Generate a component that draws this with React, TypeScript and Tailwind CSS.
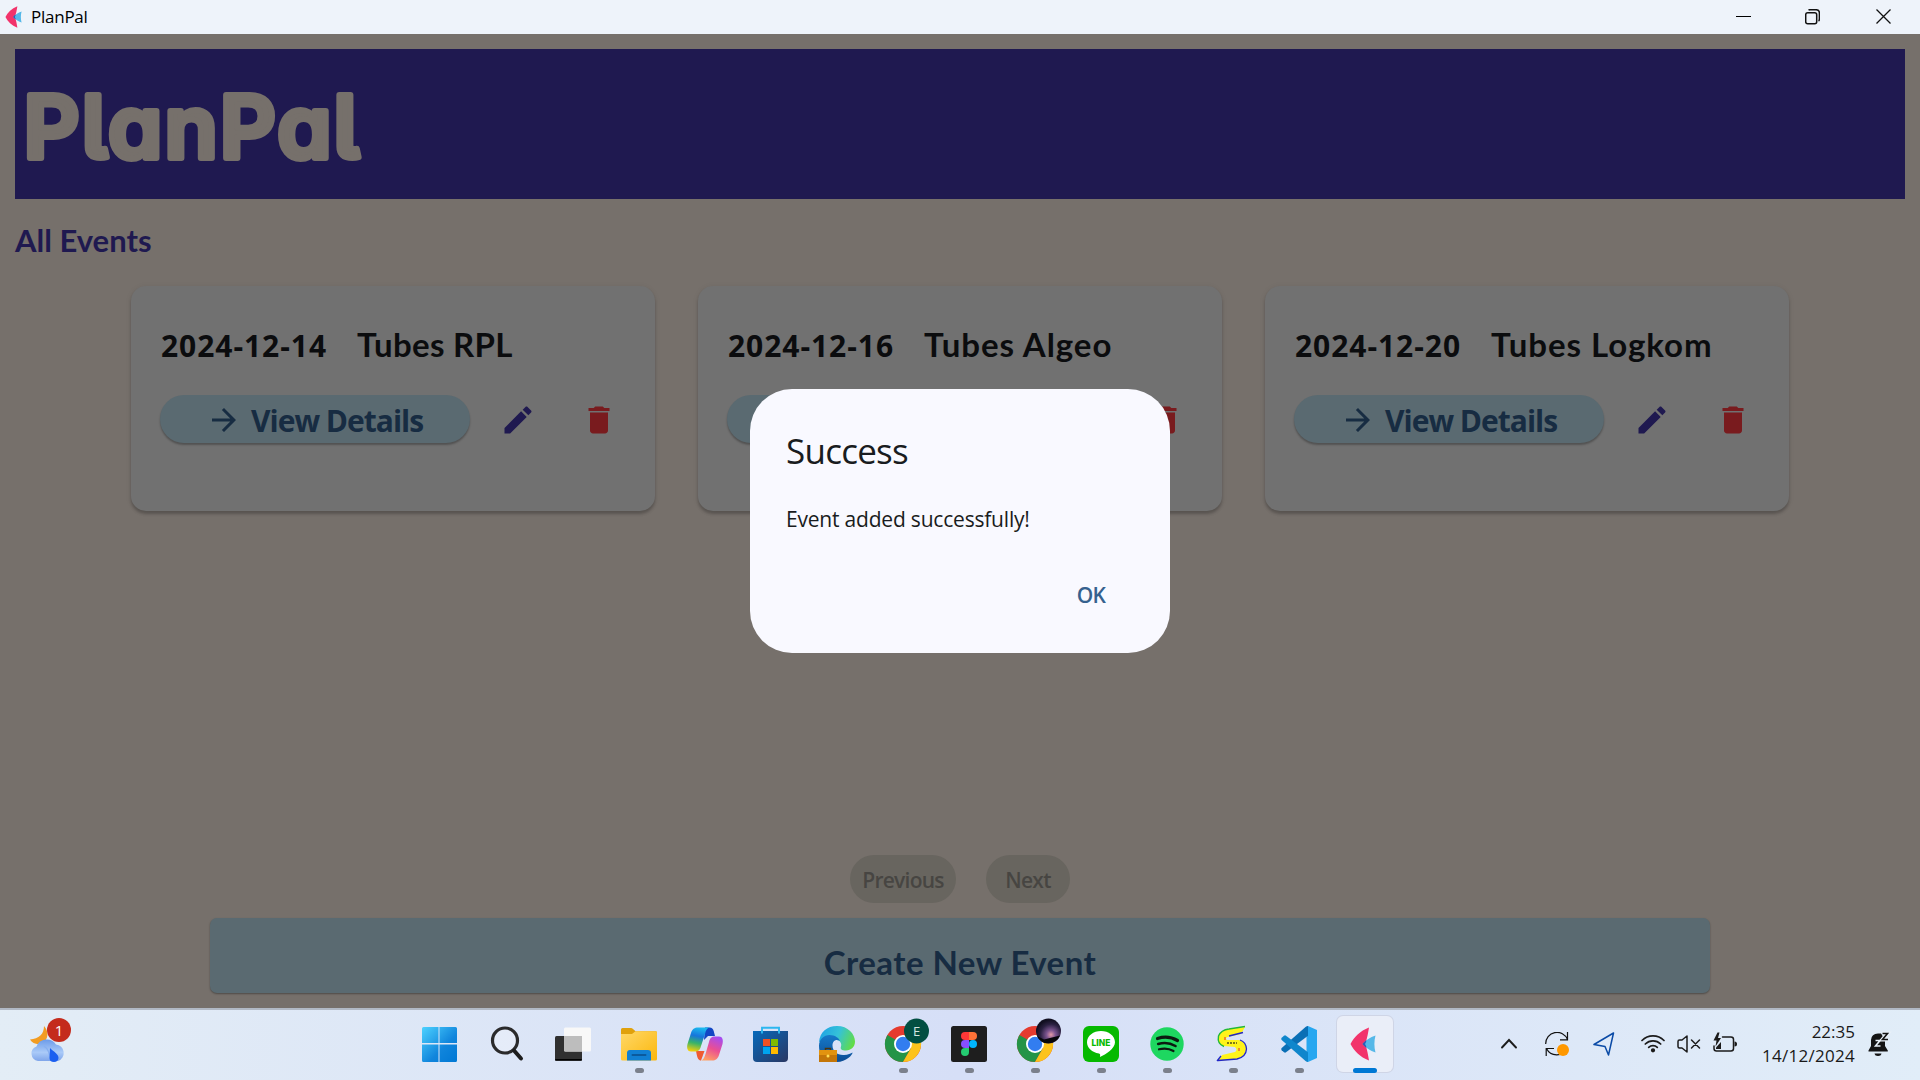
import React, { ReactNode } from "react";

type EventItem = { date: string; title: string; tracking: string };

const EVENTS: EventItem[] = [
  { date: "2024-12-14", title: "Tubes RPL", tracking: "tracking-[0.3px]" },
  { date: "2024-12-16", title: "Tubes Algeo", tracking: "tracking-[0.95px]" },
  { date: "2024-12-20", title: "Tubes Logkom", tracking: "tracking-[0.95px]" },
];

function FletLogo({ className }: { className: string }) {
  return (
    <svg viewBox="0 0 26 34" className={className}>
      <path d="M19 0.5 C10 4 4 10 0.5 17 C4 24 10 30 19 33.5 C18 28 17.500 23 15 17 C17.500 11 18 6 19 0.500Z" fill="#f2336b" />
      <path d="M25.500 8.500 C20 10.500 16 13 12.500 17 C16 21 20 23.500 25.500 25.500 C24 20 24 14 25.500 8.500Z" fill="#56b8e8" />
      <path d="M16.500 13.300 C15 14.300 13.500 15.700 12.500 17 C13.500 18.300 15 19.700 16.500 20.700 C16.300 19.300 15.800 18.200 15 17 C15.800 15.800 16.300 14.700 16.500 13.300Z" fill="#2d5bb5" />
    </svg>
  );
}

function TitleBar() {
  return (
    <header className="flex h-[34px] shrink-0 items-center bg-[#eef3fa] pl-[5px]">
      <FletLogo className="h-[22px] w-[17px]" />
      <span className="ml-[9px] text-[17px] leading-[34px] tracking-[-0.25px] text-black">PlanPal</span>
      <div className="ml-auto flex items-center">
        <svg width="15" height="16" viewBox="0 0 15 16" className="mr-[54px]">
          <path d="M0 7.500H15" stroke="#000" />
        </svg>
        <svg width="15" height="16" viewBox="0 0 15 16" className="mr-[56px]" fill="none" stroke="#111" strokeWidth="1.500">
          <rect x="0.700" y="3.700" width="11" height="11" rx="2" />
          <path d="M3.500 1.200C4 0.800 4.500 0.700 5 0.700H11C13 0.700 14.400 2 14.400 4V10C14.400 11 14 11.700 13.500 12" />
        </svg>
        <svg width="15" height="16" viewBox="0 0 15 16" className="mr-[29px]" fill="none" stroke="#111" strokeWidth="1.300">
          <path d="M0.500 0.500L14.500 14.500M14.500 0.500L0.500 14.500" />
        </svg>
      </div>
    </header>
  );
}

function EventCard({ date, title, tracking }: EventItem) {
  return (
    <article className="h-[225px] w-[524px] rounded-[15px] bg-[#717171] pt-[37px] pl-[29px] shadow-[0_3px_3px_rgba(0,0,0,0.22),0_1px_6px_rgba(0,0,0,0.07)]">
      <div className="flex h-[42px] items-baseline pl-px text-[#0b0c0e]">
        <span className="w-[196px] text-[30px] leading-[42px] font-bold tracking-[0.95px]">{date}</span>
        <span className={`font-['Lato',sans-serif] text-[33px] leading-[42px] font-bold whitespace-nowrap ${tracking}`}>{title}</span>
      </div>
      <div className="mt-[30px] flex items-center">
        <button className="flex h-12 w-[310px] items-center rounded-full bg-[#5a6a71] pt-[2px] pl-[46px] text-[#172c42] shadow-[0_2px_2px_rgba(0,0,0,0.28)]">
          <svg viewBox="0 0 24 24" className="size-9" fill="currentColor">
            <path d="M12 4l-1.410 1.410L16.170 11H4v2h12.170l-5.580 5.590L12 20l8-8z" />
          </svg>
          <span className="ml-[9px] pt-[2px] text-[30px] leading-[40px] font-bold tracking-[-1px] whitespace-nowrap">View Details</span>
        </button>
        <svg viewBox="0 0 24 24" className="mt-[2px] ml-[30px] size-9" fill="#1f1950">
          <path d="M3 17.250V21h3.750L17.810 9.940l-3.750-3.750L3 17.250zM20.710 7.040c.39-.39.39-1.020 0-1.410l-2.340-2.340c-.39-.39-1.020-.39-1.410 0l-1.830 1.830 3.750 3.750 1.830-1.830z" />
        </svg>
        <svg viewBox="0 0 24 24" className="mt-[2px] ml-[45px] size-9" fill="#791b1e">
          <path d="M6 19c0 1.100.9 2 2 2h8c1.100 0 2-.9 2-2V7H6v12zM19 4h-3.500l-1-1h-5l-1 1H5v2h14V4z" />
        </svg>
      </div>
    </article>
  );
}

function SuccessDialog() {
  return (
    <div role="dialog" className="absolute top-[389px] left-[750px] h-[264px] w-[420px] rounded-[42px] bg-[#f9f9ff] px-9 pt-[38px]">
      <h2 className="text-[35px] leading-[48px] tracking-[-0.75px] text-[#191c20]">Success</h2>
      <p className="mt-[29px] text-[21px] leading-[30px] tracking-[-0.2px] whitespace-nowrap text-[#191c20]">Event added successfully!</p>
      <div className="mt-[46px] flex justify-end pr-[29px]">
        <button className="text-[21px] leading-[30px] font-semibold tracking-[-0.8px] text-[#36618e]">OK</button>
      </div>
    </div>
  );
}

function PlanPalWindow() {
  return (
    <main className="flex h-[974px] shrink-0 flex-col bg-[#76706b] px-[15px] pt-[15px]">
      <div className="h-[150px] shrink-0 bg-[#1f1950]">
        <svg viewBox="0 0 400 150" width="400" height="150">
          <text
            x="8.500"
            y="109"
            textLength="336"
            lengthAdjust="spacing"
            fill="#76706b"
            stroke="#76706b"
            strokeWidth="6"
            strokeLinejoin="round"
            className="font-['Inter',sans-serif] text-[87px] font-semibold [font-feature-settings:'cv11','cv05']"
          >
            PlanPal
          </text>
        </svg>
      </div>
      <h1 className="mt-[21px] font-['Lato',sans-serif] text-[31px] leading-[40px] font-bold text-[#1f1950]">All Events</h1>
      <section className="mt-[26px] flex gap-[43px] pl-[116px]">
        {EVENTS.map((e) => (
          <EventCard key={e.date} {...e} />
        ))}
      </section>
      <div className="mt-auto flex justify-center gap-[30px] text-[21px] leading-[30px] font-semibold tracking-[-0.75px] text-[#474542]">
        <button className="h-12 w-[106px] rounded-full bg-[#68655f] pt-[2px]">Previous</button>
        <button className="h-12 w-[84px] rounded-full bg-[#68655f] pt-[2px]">Next</button>
      </div>
      <button className="mx-auto mt-[15px] mb-[15px] h-[75px] w-[1500px] shrink-0 rounded-[7px] bg-[#5a6a71] pt-[13px] font-['Lato',sans-serif] text-[33px] leading-[40px] font-bold tracking-[0.45px] text-[#172c42] shadow-[0_1px_2px_rgba(0,0,0,0.35)]">
        Create New Event
      </button>
    </main>
  );
}

const ICON = "size-9 overflow-visible";

function WindowsIcon() {
  return (
    <svg viewBox="1.500 0 36 36" className={ICON}>
      <defs>
        <linearGradient id="win" x1="0" y1="0" x2="1" y2="1">
          <stop offset="0" stopColor="#4dd2ff" />
          <stop offset="0.600" stopColor="#1085dc" />
          <stop offset="1" stopColor="#0078d4" />
        </linearGradient>
      </defs>
      <path fill="url(#win)" d="M2 1H17V17H0.500V2.500Q0.500 1 2 1ZM18 1H34Q35.500 1 35.500 2.500V17H18ZM0.500 18.500H17V36H2Q0.500 36 0.500 34.500ZM18 18.500H35.500V34.500Q35.500 36 34 36H18Z" />
    </svg>
  );
}

function SearchIcon() {
  return (
    <svg viewBox="0 0 36 36" className={ICON} fill="none">
      <circle cx="16" cy="14.500" r="12.500" stroke="#2a2a2b" strokeWidth="3.200" fill="#ffffff40" />
      <path d="M25 24.500L32 32.500" stroke="#1d1d1d" strokeWidth="4" strokeLinecap="round" />
    </svg>
  );
}

function TaskViewIcon() {
  return (
    <svg viewBox="0 0 36 36" className={ICON}>
      <rect x="0" y="10" width="27" height="24.500" rx="1.500" fill="#303030" />
      <rect x="0" y="33" width="27" height="1.700" rx="0.800" fill="#000" />
      <rect x="9" y="1.500" width="27" height="24" rx="1.500" fill="#f8f8f8" />
      <path d="M9 10H27V25.500H10.500Q9 25.500 9 24Z" fill="#bdbdbd" />
    </svg>
  );
}

function FolderIcon() {
  return (
    <svg viewBox="0 0 36 36" className={ICON}>
      <defs>
        <linearGradient id="fold" x1="0" y1="0" x2="1" y2="1">
          <stop offset="0" stopColor="#ffd868" />
          <stop offset="1" stopColor="#fbb70c" />
        </linearGradient>
      </defs>
      <path d="M0 3.500Q0 2 1.500 2H10Q11 2 12 3L14.500 5.200H34.500Q36 5.200 36 6.500V12H0Z" fill="#e0a10c" />
      <path d="M0 8H11L14.500 5.200H34.500Q36 5.200 36 6.700V33Q36 34.500 34.500 34.500H1.500Q0 34.500 0 33Z" fill="url(#fold)" />
      <path d="M6 34.500V27Q6 24 9 24H27Q30 24 30 27V34.500Z" fill="#1180d3" />
      <rect x="10.500" y="28" width="15" height="2" rx="1" fill="#0b5a9d" />
    </svg>
  );
}

function CopilotIcon() {
  return (
    <svg viewBox="0 0 36 36" className={ICON}>
      <defs>
        <linearGradient id="cpa" x1="0.500" y1="0" x2="0.300" y2="1">
          <stop offset="0" stopColor="#1bb8ee" />
          <stop offset="0.350" stopColor="#1675dc" />
          <stop offset="0.650" stopColor="#37b36a" />
          <stop offset="1" stopColor="#f4cf0a" />
        </linearGradient>
        <linearGradient id="cpb" x1="0.700" y1="0" x2="0.300" y2="1">
          <stop offset="0" stopColor="#a64cf0" />
          <stop offset="0.500" stopColor="#ea4f92" />
          <stop offset="1" stopColor="#ffa062" />
        </linearGradient>
      </defs>
      <path d="M18 1.500H22.500C25 1.500 26 3 26.700 5L28 10H21L17 14Z" fill="#1246c4" />
      <path d="M9 25H17.500L14 34.500C11.500 34.500 10.500 32 9.800 29Z" fill="#ef5b32" />
      <path d="M11 1.500H22.500C20 2 19 4 18 8L14 20C13 24 11.500 25.500 8 25.500H4C0.500 25.500-0.500 22 0.500 18L4 7C5.300 3 7.500 1.500 11 1.500Z" fill="url(#cpa)" />
      <path d="M25.500 34.500H14C16.500 34 17.500 31 18.500 28L22 16C23 12 24.500 10.500 28 10.500H32C35.500 10.500 36.500 14 35.500 18L32 29C30.700 33 28.500 34.500 25.500 34.500Z" fill="url(#cpb)" />
    </svg>
  );
}

function StoreIcon() {
  return (
    <svg viewBox="0 0 36 36" className={ICON}>
      <defs>
        <linearGradient id="store" x1="0" y1="0" x2="1" y2="1">
          <stop offset="0" stopColor="#0669bb" />
          <stop offset="1" stopColor="#2a3763" />
        </linearGradient>
      </defs>
      <path d="M0 5H35V32Q35 36 31 36H4Q0 36 0 32Z" fill="url(#store)" />
      <path d="M9 7.500V1.800H26V7.500" fill="none" stroke="#2cb7f0" strokeWidth="1.900" />
      <path d="M10 13H17V20H10Z" fill="#f25022" />
      <path d="M18 13H25V20H18Z" fill="#7fba00" />
      <path d="M10 21H17V28H10Z" fill="#00a4ef" />
      <path d="M18 21H25V28H18Z" fill="#ffb900" />
    </svg>
  );
}

function EdgeIcon() {
  return (
    <svg viewBox="0 0 36 36" className={ICON}>
      <defs>
        <linearGradient id="edga" x1="0" y1="0.300" x2="1" y2="0.600">
          <stop offset="0" stopColor="#1fa3e4" />
          <stop offset="0.500" stopColor="#35c2d8" />
          <stop offset="1" stopColor="#62dd45" />
        </linearGradient>
        <linearGradient id="edgb" x1="0" y1="0" x2="0" y2="1">
          <stop offset="0" stopColor="#1679c9" />
          <stop offset="1" stopColor="#0c4c94" />
        </linearGradient>
      </defs>
      <path d="M0 16C1 6 8 0 18 0C29 0 36 8 36 15.500C36 21 32 24.500 27 24.500C22.500 24.500 21 23 22 20.500C23 17.500 21 14 17.500 14C13.500 14 10 10 0 16Z" fill="url(#edga)" />
      <path d="M0 20C0 13 5 9 10.500 9C16 9 20 12 21 15C17 12.500 13.500 15 13.500 19.500C13.500 25 18.500 29.500 25 29C29 28.800 32 27.500 33.500 26.500C34 28.500 27 36 18 36H10C3 33 0 27 0 20Z" fill="url(#edgb)" />
      <rect x="0" y="24" width="18" height="12" fill="#c47608" />
      <rect x="0" y="24" width="18" height="5" fill="#e2930f" />
      <path d="M6.500 24V22.500H11.500V24" fill="none" stroke="#4a3410" strokeWidth="1.500" />
      <circle cx="9" cy="30" r="1.500" fill="#ffdf55" />
    </svg>
  );
}

function ChromeIcon({ children }: { children: ReactNode }) {
  return (
    <svg viewBox="0 0 36 36" className={ICON}>
      <circle cx="18" cy="18" r="18" fill="#e53b2f" />
      <path d="M18 18L2.400 9A18 18 0 0 0 18 36L25.800 22.500Z" fill="#249447" />
      <path d="M18 9H33.600A18 18 0 0 1 18 36L25.800 22.500Z" fill="#fcc31c" />
      <circle cx="18" cy="18" r="9" fill="#fff" />
      <circle cx="18" cy="18" r="7.200" fill="#327df0" />
      {children}
    </svg>
  );
}

function FigmaIcon() {
  return (
    <svg viewBox="0 0 36 36" className={ICON}>
      <rect width="36" height="36" rx="2.500" fill="#1e1e1e" />
      <path d="M18 6H14A4 4 0 0 0 14 14H18Z" fill="#ff3737" />
      <path d="M18 6H22A4 4 0 0 1 22 14H18Z" fill="#ff7237" />
      <path d="M18 14H14A4 4 0 0 0 14 22H18Z" fill="#874fff" />
      <circle cx="22" cy="18" r="4" fill="#00b6ff" />
      <path d="M18 22H14A4 4 0 1 0 18 26Z" fill="#24cb71" />
    </svg>
  );
}

function LineIcon() {
  return (
    <svg viewBox="0 0 36 36" className={ICON}>
      <rect width="36" height="36" rx="6" fill="#06b900" />
      <path d="M18 5C10.500 5 4 9.800 4 16.300C4 22 9 26.500 16 27.500C17.500 27.800 17.200 29 17 31C23 28.500 32 22.500 32 16.300C32 9.800 25.500 5 18 5Z" fill="#fff" />
      <text x="8.600" y="19.600" textLength="18.800" lengthAdjust="spacingAndGlyphs" fill="#06b900" className="font-['Inter',sans-serif] text-[8.500px] font-extrabold">LINE</text>
    </svg>
  );
}

function SpotifyIcon() {
  return (
    <svg viewBox="0 0 36 36" className={ICON} fill="none" stroke="#0c1a10" strokeLinecap="round">
      <circle cx="18" cy="18" r="16.700" fill="#1ed760" stroke="none" />
      <path d="M8.500 12.500C15 10.500 23 11.300 28.500 14.500" strokeWidth="3.200" />
      <path d="M9.200 18C15 16.300 21.500 17.100 26.500 20" strokeWidth="2.600" />
      <path d="M10 23.300C15 22 20.500 22.600 24.500 25" strokeWidth="2.200" />
    </svg>
  );
}

function SIcon() {
  return (
    <svg viewBox="0 0 36 36" className={ICON} fill="none">
      <path d="M30 1L26 8L13 11Q9 12 12 14H24Q32 16 31 24Q30 31 22 33L3 35L7 29L20 26Q23 24 20 21L9 20Q2 18 4 10Q6 4 15 3Z" fill="#fff31a" />
      <path d="M9 20.500Q2 18 3.500 10Q6 4 14 3L30 0.500" stroke="#22b935" strokeWidth="1.400" />
      <path d="M3 34.500L22 33Q31 31 31.500 23Q31 16 25 14M28 6.500L14 10M2 35L6 30" stroke="#2127c8" strokeWidth="1.300" />
      <path d="M12 17H22" stroke="#55511a" strokeWidth="1.300" strokeDasharray="2 1" />
      <path d="M10 11V14M24 22V25" stroke="#e23b2d" strokeWidth="1.100" />
    </svg>
  );
}

function VsCodeIcon() {
  return (
    <svg viewBox="0 0 36 36" className={ICON}>
      <path d="M27 0L36 4V32L27 36L25.500 34V2Z" fill="#27a7f0" />
      <path d="M27 0V9.700L5 26.300Q4 27 3 26.200L0.700 24.200Q-0.400 23 0.700 22L24.500 1Q25.700 0 27 0Z" fill="#0a6fb5" />
      <path d="M27 36V26.300L5 9.700Q4 9 3 9.800L0.700 11.800Q-0.400 13 0.700 14L24.500 35Q25.700 36 27 36Z" fill="#0f86cc" />
    </svg>
  );
}

function WeatherIcon() {
  return (
    <svg viewBox="0 0 36 36" className={ICON}>
      <defs>
        <linearGradient id="cloud" x1="0" y1="0" x2="0" y2="1">
          <stop offset="0" stopColor="#6c9be9" />
          <stop offset="0.600" stopColor="#aacaf8" />
          <stop offset="1" stopColor="#7fa5ea" />
        </linearGradient>
      </defs>
      <path d="M14 0C18 4 19 11 14.500 15.500C10.500 20 3 18.500 0 13.500C9 13 14 8 14 0Z" fill="#f29c22" />
      <path d="M8 35A7.500 7.500 0 0 1 6.500 20.500A11 11 0 0 1 26 18.500A8.500 8.500 0 0 1 28 35Z" fill="url(#cloud)" />
      <path d="M14 20Q20 24 20 34" fill="none" stroke="#87aff0" strokeWidth="1.500" />
      <path d="M20 22C24 26 28.500 28 28.500 32Q28 36 24 36Q19.500 36 19.500 32Z" fill="#1b5ff0" />
    </svg>
  );
}

type TaskItem = { name: string; icon: ReactNode; state?: "open" | "active" };

const TASKS: TaskItem[] = [
  { name: "start", icon: <WindowsIcon /> },
  { name: "search", icon: <SearchIcon /> },
  { name: "taskview", icon: <TaskViewIcon /> },
  { name: "files", icon: <FolderIcon />, state: "open" },
  { name: "copilot", icon: <CopilotIcon /> },
  { name: "store", icon: <StoreIcon /> },
  { name: "edge", icon: <EdgeIcon /> },
  {
    name: "chrome-e",
    state: "open",
    icon: (
      <ChromeIcon>
        <circle cx="31.500" cy="5" r="12.500" fill="#024f42" />
        <text x="31.500" y="9.500" textAnchor="middle" fill="#d5e5e1" className="font-['Open_Sans',sans-serif] text-[13px]">E</text>
      </ChromeIcon>
    ),
  },
  { name: "figma", icon: <FigmaIcon />, state: "open" },
  {
    name: "chrome-p",
    state: "open",
    icon: (
      <ChromeIcon>
        <defs>
          <radialGradient id="sky" cx="0.600" cy="0.650" r="0.600">
            <stop offset="0" stopColor="#e39aa6" />
            <stop offset="0.300" stopColor="#7d5590" />
            <stop offset="0.700" stopColor="#2b2142" />
            <stop offset="1" stopColor="#110f20" />
          </radialGradient>
        </defs>
        <circle cx="31.500" cy="5" r="12.500" fill="url(#sky)" />
        <path d="M20 10L27 13.500L33 12L43 9.500A12.500 12.500 0 0 1 20 10Z" fill="#08070c" />
      </ChromeIcon>
    ),
  },
  { name: "line", icon: <LineIcon />, state: "open" },
  { name: "spotify", icon: <SpotifyIcon />, state: "open" },
  { name: "s", icon: <SIcon />, state: "open" },
  { name: "vscode", icon: <VsCodeIcon />, state: "open" },
  { name: "planpal", icon: <FletLogo className="h-[34px] w-[26px]" />, state: "active" },
];

function TaskButton({ icon, state }: TaskItem) {
  return (
    <div className="relative flex h-[72px] w-[66px] items-center justify-center">
      <div className={state === "active" ? "flex h-14 w-14 items-center justify-center rounded-[6px] bg-[#eaeef8] pr-1 shadow-[0_0_0_1px_#cfd5e6]" : "flex size-9"}>{icon}</div>
      {state === "open" && <span className="absolute bottom-[7px] left-[29px] h-[5px] w-[9px] rounded-full bg-[#7b808c]" />}
      {state === "active" && <span className="absolute bottom-[7px] left-[21px] h-[5px] w-6 rounded-full bg-[#0078d4]" />}
    </div>
  );
}

function Tray() {
  return (
    <div className="flex items-center">
      <svg viewBox="0 0 24 24" className="mr-6 size-6" fill="none" stroke="#1b1b1b" strokeWidth="1.900" strokeLinecap="round">
        <path d="M5 15.500L12 8L19 15.500" />
      </svg>
      <svg viewBox="0 0 24 24" className="mr-6 size-6" fill="none" stroke="#111" strokeWidth="1.200">
        <path d="M0.700 12A11.300 11.300 0 0 1 22.500 7.500M22.500 0V7.800H15M22 16A11.300 11.300 0 0 1 1.500 16.500M1.200 24V16.500H9" />
        <circle cx="18" cy="18" r="6" fill="#ff9800" stroke="none" />
      </svg>
      <svg viewBox="0 0 24 24" className="mr-6 size-6" fill="none" stroke="#0a4aa6" strokeWidth="1.500" strokeLinejoin="round">
        <path d="M20.500 1L1 12.500L12 14.500L15.500 23Z" />
      </svg>
      <svg viewBox="0 0 24 24" className="mr-3 size-6" fill="none" stroke="#1b1b1b" strokeWidth="1.700" strokeLinecap="round">
        <path d="M1 8.500A15.500 15.500 0 0 1 23 8.500M4.300 12A11 11 0 0 1 19.700 12M7.700 15.300A6.200 6.200 0 0 1 16.300 15.300" />
        <circle cx="12" cy="18.300" r="1.300" fill="#1b1b1b" />
      </svg>
      <svg viewBox="0 0 24 24" className="mr-3 size-6" fill="none" stroke="#1b1b1b" strokeWidth="1.500" strokeLinecap="round" strokeLinejoin="round">
        <path d="M10 4V20L5 16H2.500Q1 16 1 14.500V9.500Q1 8 2.500 8H5ZM14.500 8L22.500 16M22.500 8L14.500 16" />
      </svg>
      <svg viewBox="0 0 24 24" className="size-6" fill="none" stroke="#1b1b1b" strokeWidth="1.500" strokeLinecap="round">
        <path d="M9.500 5H18Q20.500 5 20.500 7.500V16.500Q20.500 19 18 19H3.500Q1 19 1 16.500V14" />
        <path d="M21.500 9.500V14.500Q24 14.500 24 12Q24 9.500 21.500 9.500Z" fill="#1b1b1b" stroke="none" />
        <path d="M4.500 0.500L0.500 8.500H3.500L2.500 14.500L8 6H5L6.500 0.500Z" fill="#1b1b1b" stroke="none" />
        <path d="M3 17V15.500L8 10V17Z" fill="#1b1b1b" stroke="none" />
      </svg>
      <div className="mb-px w-[118px] text-right text-[17px] leading-6 text-[#191919]">
        <div>22:35</div>
        <div className="tracking-[0.28px]">14/12/2024</div>
      </div>
      <svg viewBox="0 0 24 24" className="mr-[28px] ml-[13px] size-6 overflow-visible">
        <path d="M0.500 18.500L3 14V8Q3.500 1.500 10 1.500H13L17 7.500V14L19.800 18.500V19.500H0.500Z" fill="#141414" />
        <path d="M6.500 21.500H13.500Q13 24 10 24Q7 24 6.500 21.500Z" fill="#141414" />
        <path d="M7.500 8.500H12L7.500 14H12.500" fill="none" stroke="#e8f0f8" strokeWidth="1.600" />
        <path d="M14.500 1.500H19.500L14.500 7.500H20" fill="none" stroke="#e8f0f8" strokeWidth="4" />
        <path d="M14.500 1.500H19.500L14.500 7.500H20" fill="none" stroke="#141414" strokeWidth="1.600" />
      </svg>
    </div>
  );
}

function Taskbar() {
  return (
    <footer className="flex h-[72px] shrink-0 items-center bg-linear-to-r from-[#e3edf6] via-[#d6dff7] to-[#e1edf8] shadow-[inset_0_2px_0_#b1b9c5]">
      <div className="relative ml-[30px] size-9">
        <WeatherIcon />
        <span className="absolute -top-2 left-[17px] flex size-6 items-center justify-center rounded-full bg-[#c42b1c] text-[15px] leading-none text-white">1</span>
      </div>
      <nav className="ml-[342px] flex">
        {TASKS.map((t) => (
          <TaskButton key={t.name} {...t} />
        ))}
      </nav>
      <div className="ml-auto">
        <Tray />
      </div>
    </footer>
  );
}

export default function App() {
  return (
    <div className="relative flex h-[1080px] w-[1920px] flex-col overflow-hidden font-['Open_Sans',sans-serif]">
      <TitleBar />
      <PlanPalWindow />
      <Taskbar />
      <SuccessDialog />
    </div>
  );
}
